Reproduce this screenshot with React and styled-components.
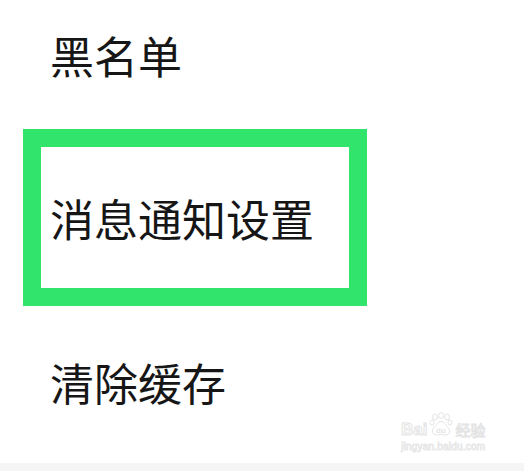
import React from "react";
import styled, { createGlobalStyle } from "styled-components";

const GlobalStyle = createGlobalStyle`
  html, body {
    margin: 0;
    padding: 0;
    background: #ffffff;
  }
  body {
    font-family: "Noto Sans CJK SC", "Noto Sans", sans-serif;
  }
`;

const Page = styled.div`
  position: relative;
  width: 524px;
  height: 471px;
  overflow: hidden;
  display: flex;
  flex-direction: column;
  background: #ffffff;
`;

const List = styled.div`
  flex: 1;
  display: flex;
  flex-direction: column;
`;

const Item = styled.div`
  height: 44px;
  padding-left: ${(p) => p.$indent}px;
  margin-top: ${(p) => p.$top || 0}px;
  font-size: 44px;
  line-height: 44px;
  color: #161616;
  white-space: nowrap;
`;

const Highlight = styled.div`
  box-sizing: border-box;
  width: 344px;
  height: 177px;
  margin-left: 23px;
  margin-top: ${(p) => p.$top}px;
  border: 18px solid #31e46c;
  display: flex;
  align-items: center;
`;

const Footer = styled.div`
  height: 8px;
  background: #f5f5f5;
`;

const Watermark = styled.div`
  position: absolute;
  left: 401px;
  top: 412px;
  display: flex;
  flex-direction: column;
  align-items: center;
  color: #ececec;
  pointer-events: none;
`;

const Brand = styled.div`
  display: flex;
  align-items: flex-end;
  gap: 2px;
  font-family: "Liberation Sans", Arial, sans-serif;
`;

const Bai = styled.span`
  font-size: 17px;
  font-weight: 700;
  line-height: 17px;
  color: #ffffff;
  -webkit-text-stroke: 1px #e4e4e4;
`;

const Jingyan = styled.span`
  font-family: "Noto Sans CJK SC", sans-serif;
  font-size: 15px;
  line-height: 17px;
  color: #ffffff;
  -webkit-text-stroke: 1px #e4e4e4;
`;

const Site = styled.span`
  font-family: "Liberation Sans", Arial, sans-serif;
  font-size: 10px;
  line-height: 12px;
  margin-top: 3px;
  color: #ffffff;
  -webkit-text-stroke: 0.8px #e6e6e6;
  letter-spacing: 0.2px;
`;

const Paw = () => (
  <svg width="24" height="26" viewBox="0 0 24 26" fill="none" stroke="#e4e4e4" strokeWidth="1">
    <ellipse cx="6" cy="5" rx="2.4" ry="3" />
    <ellipse cx="12" cy="3.5" rx="2.4" ry="3" />
    <ellipse cx="18" cy="5" rx="2.4" ry="3" />
    <ellipse cx="3" cy="10.5" rx="2" ry="2.5" />
    <ellipse cx="21" cy="10.5" rx="2" ry="2.5" />
    <path d="M12 9.5c-3 0-4.5 3.5-7 6-2.5 2.5-2 7.5 2.5 7.5 2 0 3-.8 4.5-.8s2.5.8 4.5.8c4.5 0 5-5 2.5-7.5-2.5-2.5-4-6-7-6z" />
    <text x="12" y="20.5" textAnchor="middle" fontSize="8" fontWeight="700" fontFamily="Liberation Sans, Arial, sans-serif" fill="#e4e4e4" stroke="none">du</text>
  </svg>
);

export default function App() {
  return (
    <>
      <GlobalStyle />
      <Page>
        <List>
          <Item $indent={50} $top={33}>黑名单</Item>
          <Highlight $top={52}>
            <Item $indent={9}>消息通知设置</Item>
          </Highlight>
          <Item $indent={50} $top={54}>清除缓存</Item>
        </List>
        <Footer />
        <Watermark>
          <Brand>
            <Bai>Bai</Bai>
            <Paw />
            <Jingyan>经验</Jingyan>
          </Brand>
          <Site>jingyan.baidu.com</Site>
        </Watermark>
      </Page>
    </>
  );
}
